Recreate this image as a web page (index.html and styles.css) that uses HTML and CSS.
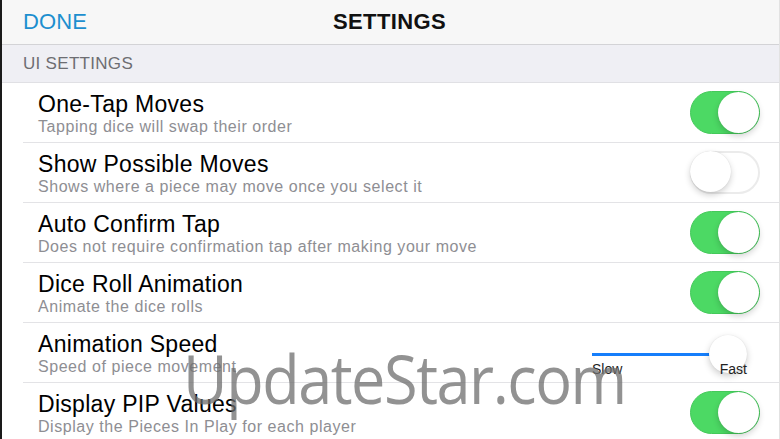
FILE: index.html
```html
<!DOCTYPE html>
<html>
<head>
<meta charset="utf-8">
<link rel="stylesheet" href="styles.css">
</head>
<body>
<div class="screen">
  <header class="nav">
    <span class="done">DONE</span>
    <span class="title">SETTINGS</span>
    <span></span>
  </header>
  <div class="section">UI SETTINGS</div>
  <ul class="list">
    <li class="row">
      <div class="text"><div class="label">One-Tap Moves</div><div class="desc">Tapping dice will swap their order</div></div>
      <span class="toggle on"><span class="knob"></span></span>
    </li>
    <li class="row">
      <div class="text"><div class="label">Show Possible Moves</div><div class="desc">Shows where a piece may move once you select it</div></div>
      <span class="toggle off"><span class="knob"></span></span>
    </li>
    <li class="row">
      <div class="text"><div class="label">Auto Confirm Tap</div><div class="desc">Does not require confirmation tap after making your move</div></div>
      <span class="toggle on"><span class="knob"></span></span>
    </li>
    <li class="row">
      <div class="text"><div class="label">Dice Roll Animation</div><div class="desc">Animate the dice rolls</div></div>
      <span class="toggle on"><span class="knob"></span></span>
    </li>
    <li class="row">
      <div class="text"><div class="label">Animation Speed</div><div class="desc">Speed of piece movement</div></div>
      <div class="slider">
        <div class="track"><span class="thumb"></span></div>
        <div class="marks"><span>Slow</span><span>Fast</span></div>
      </div>
    </li>
    <li class="row">
      <div class="text"><div class="label">Display PIP Values</div><div class="desc">Display the Pieces In Play for each player</div></div>
      <span class="toggle on"><span class="knob"></span></span>
    </li>
  </ul>
  <div class="watermark">UpdateStar.com</div>
</div>
</body>
</html>
```
FILE: styles.css
```css
* { box-sizing: border-box; }
html, body { margin: 0; padding: 0; }
body {
  width: 780px;
  height: 439px;
  overflow: hidden;
  background: #fff;
  font-family: "Liberation Sans", Arial, sans-serif;
}
.screen {
  position: relative;
  width: 780px;
  height: 439px;
  border-left: 2px solid #1a1a1a;
  border-right: 1px solid #e2e2e2;
  overflow: hidden;
}
.nav {
  height: 45px;
  background: #f7f7f7;
  border-bottom: 1px solid #d3d3d6;
  display: grid;
  grid-template-columns: 1fr auto 1fr;
  align-items: center;
  padding: 0 21px;
}
.done {
  font-size: 22px;
  color: #1d8fcf;
  letter-spacing: 0.1px;
}
.title {
  font-size: 22px;
  font-weight: bold;
  color: #111;
  letter-spacing: 0.4px;
  margin-left: -2px;
}
.section {
  height: 38px;
  background: #efeff4;
  border-bottom: 1px solid #e0e0e4;
  padding-left: 21px;
  display: flex;
  align-items: center;
  font-size: 17px;
  letter-spacing: 0.3px;
  color: #6d6d72;
  padding-top: 1px;
}
.list {
  list-style: none;
  margin: 0;
  padding: 0;
}
.row {
  height: 60px;
  margin-left: 21px;
  padding: 0 19px 0 15px;
  border-bottom: 1px solid #e3e3e6;
  display: flex;
  align-items: center;
}
.text {
  flex: 1;
  align-self: flex-start;
  padding-top: 8px;
}
.label {
  font-size: 23px;
  line-height: 26px;
  letter-spacing: 0.3px;
  color: #000;
}
.desc {
  font-size: 16px;
  line-height: 20px;
  color: #8e8e93;
  letter-spacing: 0.55px;
}
.toggle {
  position: relative;
  width: 70px;
  height: 43px;
  border-radius: 22px;
  flex: none;
}
.toggle.on {
  background: #4cd964;
  border: 1px solid #44c95a;
}
.toggle.off {
  background: #fff;
  border: 2px solid #ebebeb;
}
.knob {
  position: absolute;
  top: 0;
  width: 41px;
  height: 41px;
  border-radius: 50%;
  background: #fff;
  box-shadow: 0 3px 6px rgba(0,0,0,0.18), 0 0 1px rgba(0,0,0,0.15);
}
.toggle.on .knob { right: 0; }
.toggle.off .knob { left: -2px; top: -2px; }
.slider {
  position: relative;
  width: 155px;
  margin-right: 13px;
  align-self: flex-start;
  padding-top: 30px;
}
.track {
  position: relative;
  width: 136px;
  height: 3px;
  background: #157efb;
}
.thumb {
  position: absolute;
  left: 117px;
  top: -18px;
  width: 38px;
  height: 38px;
  border-radius: 50%;
  background: #fff;
  box-shadow: 0 3px 7px rgba(0,0,0,0.2), 0 0 1px rgba(0,0,0,0.12);
}
.marks {
  position: relative;
  display: flex;
  justify-content: space-between;
  margin-top: 5px;
  font-size: 14px;
  line-height: 16px;
  color: #222;
}
.watermark {
  position: absolute;
  left: 181px;
  top: 338px;
  font-family: "Open Sans", sans-serif;
  font-size: 68px;
  line-height: 80px;
  letter-spacing: -1.6px;
  transform: scaleX(0.9);
  transform-origin: left top;
  color: rgba(110,110,110,0.75);
  white-space: nowrap;
}
```
